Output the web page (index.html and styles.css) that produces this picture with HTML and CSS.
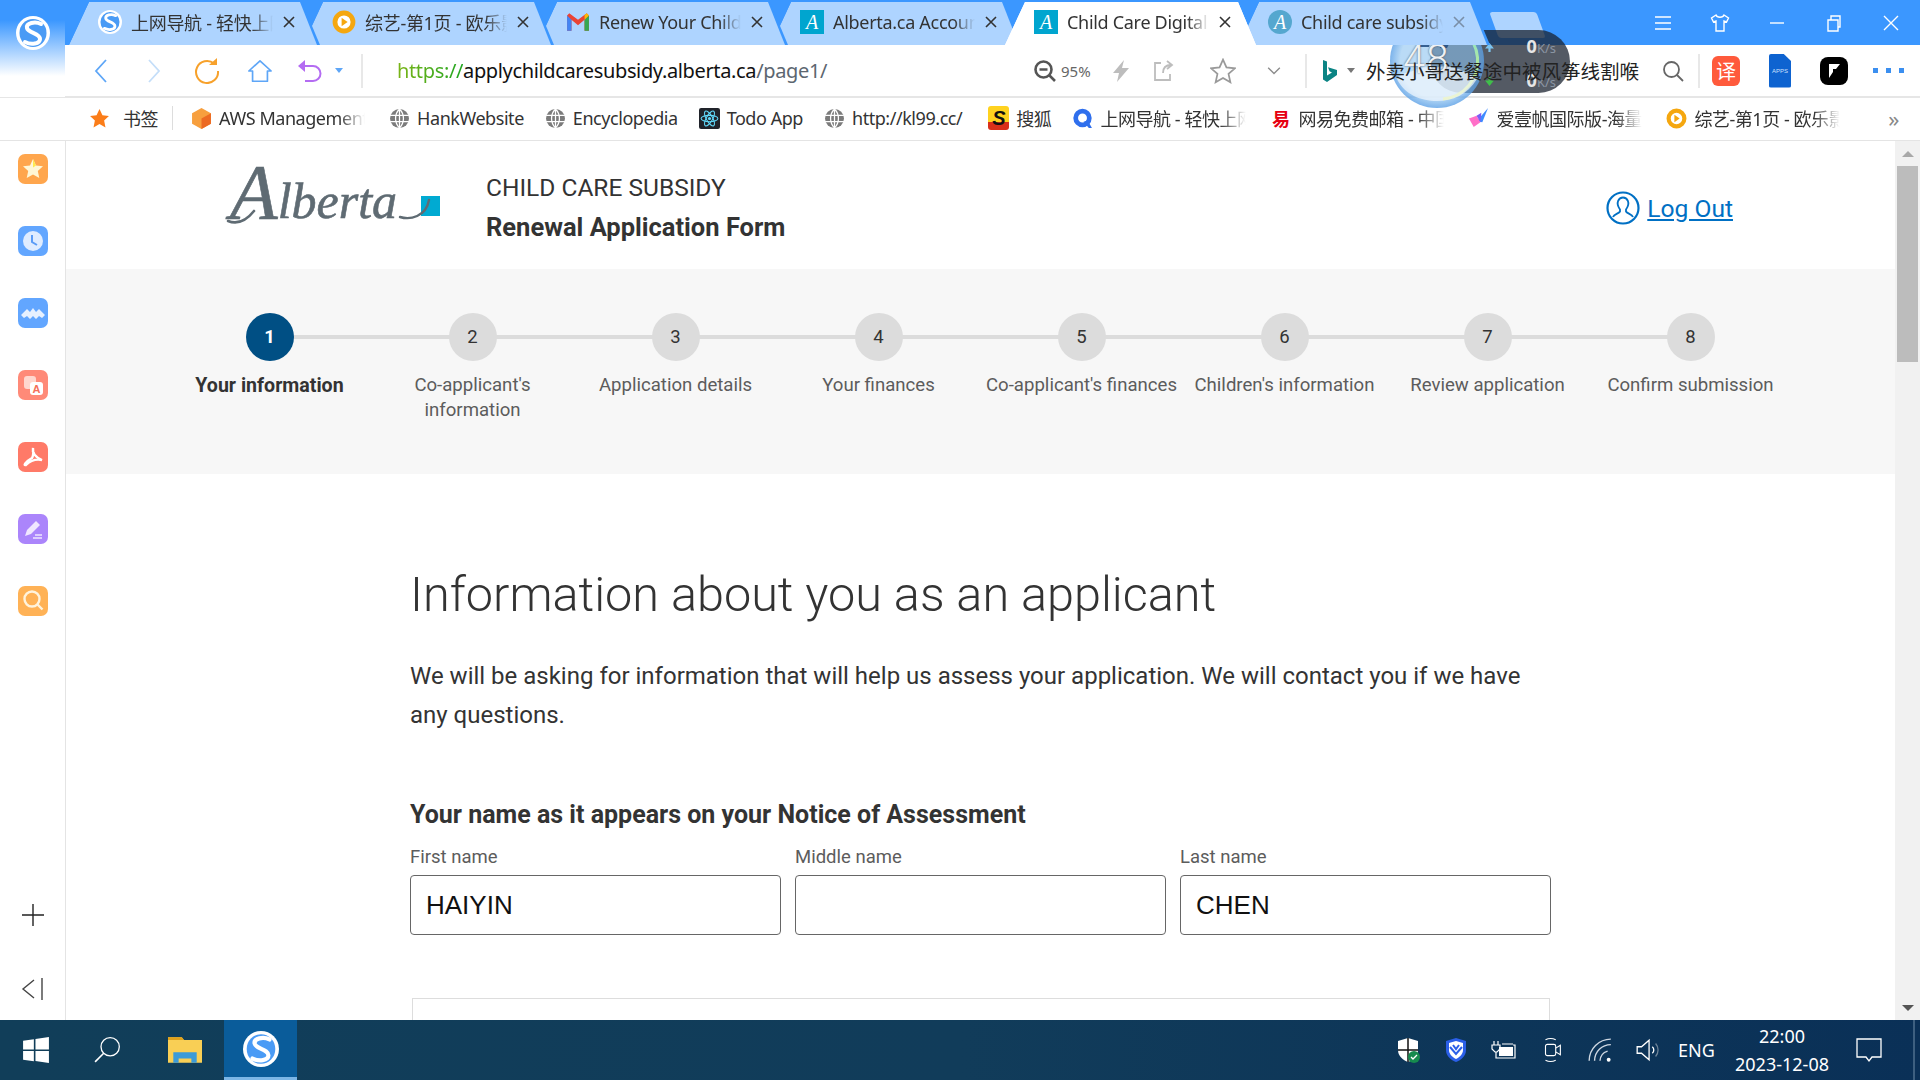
FILE: index.html
```html
<!DOCTYPE html>
<html lang="en">
<head>
    <meta charset="UTF-8">
    <meta name="viewport" content="width=device-width, initial-scale=1.0">
    <title>Child Care Digital Services</title>
    <link rel="stylesheet" href="styles.css">
</head>
<body>
    <svg class="defs" width="0" height="0">
        <symbol id="sogou" viewBox="0 0 34 34">
            <ellipse cx="17" cy="17" rx="17" ry="17" fill="#fff"/>
            <ellipse cx="17" cy="17" rx="13.500" ry="14" fill="#4a9bf5"/>
            <path d="M25 8C19 5 10 7 11 12c1 5 13 5 13 11 0 5-9 6-15 3" fill="none" stroke="#fff" stroke-width="4" stroke-linecap="round"/>
        </symbol>
        <symbol id="globe" viewBox="0 0 20 20">
            <circle cx="10" cy="10" r="9" fill="#7b7b7b"/>
            <path d="M1 7h18M1 13h18M10 1v18M10 1c-5 5-5 13 0 18M10 1c5 5 5 13 0 18" fill="none" stroke="#fff" stroke-width="1.200"/>
        </symbol>
        <symbol id="close" viewBox="0 0 14 14">
            <path d="M2 2l10 10M12 2L2 12" fill="none" stroke="currentColor" stroke-width="1.600"/>
        </symbol>
        <symbol id="play" viewBox="0 0 20 20">
            <circle cx="10" cy="10" r="7.500" fill="#fff" stroke="#f5a70f" stroke-width="4"/>
            <path d="M8 6.500l5 3.500-5 3.500z" fill="#f5a70f"/>
        </symbol>
    </svg>

    <div class="window">
        <!-- tab strip -->
        <div class="tabbar">
            <div class="tabs">
                <div class="tab"><svg class="fav"><use href="#sogou"/></svg><span class="tab-title">上网导航 - 轻快上网</span><svg class="tab-x"><use href="#close"/></svg></div>
                <div class="tab"><svg class="fav"><use href="#play"/></svg><span class="tab-title">综艺-第1页 - 欧乐影院</span><svg class="tab-x"><use href="#close"/></svg></div>
                <div class="tab">
                    <svg class="fav" viewBox="0 0 22 22">
                        <path d="M1 5v14h4V9l6 5 6-5v10h4V5l-2-2-8 6-8-6z" fill="#ea4335"/>
                        <path d="M1 5v14h4V9z" fill="#4285f4"/><path d="M17 9v10h4V5z" fill="#34a853"/><path d="M21 5l-2-2-2 1.500V9z" fill="#fbbc04"/>
                    </svg>
                    <span class="tab-title">Renew Your Child Care</span><svg class="tab-x"><use href="#close"/></svg>
                </div>
                <div class="tab"><span class="fav fav-ab">A</span><span class="tab-title">Alberta.ca Account</span><svg class="tab-x"><use href="#close"/></svg></div>
                <div class="tab tab-active"><span class="fav fav-ab">A</span><span class="tab-title">Child Care Digital Services</span><svg class="tab-x"><use href="#close"/></svg></div>
                <div class="tab"><span class="fav fav-ab fav-round">A</span><span class="tab-title">Child care subsidy</span><svg class="tab-x tab-x-faint"><use href="#close"/></svg></div>
                <div class="tab-new"></div>
            </div>
            <div class="win-controls">
                <svg viewBox="0 0 20 20"><path d="M2 4h16M2 10h16M2 16h16"/></svg>
                <svg viewBox="0 0 20 20"><path d="M6 2L1.500 5l2 4L6 8v10h8V8l2.500 1 2-4L14 2c-1 3-7 3-8 0z"/></svg>
                <svg viewBox="0 0 20 20"><path d="M3 10h14"/></svg>
                <svg viewBox="0 0 20 20"><path d="M4 7h10v11H4zM7 7V3h9v11h-2"/></svg>
                <svg viewBox="0 0 20 20"><path d="M3 3l14 14M17 3L3 17"/></svg>
            </div>
        </div>

        <!-- address bar -->
        <div class="toolbar">
            <div class="nav-btn"><svg viewBox="0 0 16 26"><path d="M13 2L3 13l10 11" fill="none" stroke="#5ea6f7" stroke-width="1.800"/></svg></div>
            <div class="nav-btn"><svg viewBox="0 0 16 26"><path d="M3 2l10 11L3 24" fill="none" stroke="#c4def9" stroke-width="1.800"/></svg></div>
            <div class="nav-btn"><svg viewBox="0 0 26 26"><path d="M20 5.500A11 11 0 1 0 24 13" fill="none" stroke="#f7a12b" stroke-width="2"/><path d="M15 7h8V0z" fill="#f7a12b"/></svg></div>
            <div class="nav-btn"><svg viewBox="0 0 28 26"><path d="M14 2L2 13h4v11h16V13h4z" fill="none" stroke="#5ea6f7" stroke-width="1.800" stroke-linejoin="round"/></svg></div>
            <div class="nav-btn nav-undo"><svg viewBox="0 0 26 26"><path d="M7 8h10a7.500 7.500 0 0 1 0 15H9" fill="none" stroke="#b46cf2" stroke-width="2"/><path d="M9 2L2 8l7 6z" fill="#b46cf2"/></svg></div>
            <span class="caret caret-blue"></span>
            <span class="tb-sep tb-sep-first"></span>
            <div class="url"><span class="url-scheme">https://</span><span class="url-host">applychildcaresubsidy.alberta.ca</span><span class="url-path">/page1/</span></div>
            <svg class="tool tool-zoom" viewBox="0 0 24 24"><circle cx="10.500" cy="10.500" r="8" fill="none" stroke="#555" stroke-width="2.600"/><path d="M6.500 10.500h8M16 16l6 6" stroke="#555" stroke-width="2.600"/></svg>
            <span class="zoom-level">95%</span>
            <svg class="tool tool-bolt" viewBox="0 0 24 24"><path d="M15 1L4 14h6l-2 9 12-14h-7z" fill="#bdbdbd"/></svg>
            <svg class="tool tool-share" viewBox="0 0 24 24"><path d="M10 4H4v17h15v-6M12 14c0-5 3-8 8-8M16 2l5 4-5 4" fill="none" stroke="#bdbdbd" stroke-width="1.800"/></svg>
            <svg class="tool tool-star" viewBox="0 0 24 24"><path d="M12 1.500l3.200 7.200 7.800.8-5.900 5.200 1.700 7.700L12 18.400l-6.800 4 1.700-7.700L1 9.500l7.800-.8z" fill="none" stroke="#9a9a9a" stroke-width="1.600"/></svg>
            <svg class="tool tool-chev" viewBox="0 0 24 24"><path d="M5 8l7 7 7-7" fill="none" stroke="#8c8c8c" stroke-width="1.600"/></svg>
            <span class="tb-sep tb-sep-mid"></span>
            <svg class="tool tool-bing" viewBox="0 0 24 24"><path d="M6 1l4 1.500v14l5-3-2.500-1.200-1.500-4L20 11v5L10 23l-4-2.500z" fill="#0b8484"/></svg>
            <span class="caret"></span>
            <div class="search-text">外卖小哥送餐途中被风筝线割喉</div>
            <svg class="tool tool-search" viewBox="0 0 24 24"><circle cx="10.500" cy="10.500" r="7.500" fill="none" stroke="#666" stroke-width="1.800"/><path d="M16 16l6 6" stroke="#666" stroke-width="1.800"/></svg>
            <span class="tb-sep tb-sep-end"></span>
            <span class="ext ext-yi">译</span>
            <span class="ext ext-apps">APPS</span>
            <svg class="ext ext-black" viewBox="0 0 28 28"><rect width="28" height="28" rx="8"/><path d="M9 7h11l-4 5h-3v3l-4 6z" fill="#fff"/></svg>
            <div class="ext-dots"><i></i><i></i><i></i></div>
        </div>

        <!-- bookmarks -->
        <div class="bookmarks">
            <div class="bm bm-first"><svg class="bm-ico" viewBox="0 0 20 20"><path d="M10 1l2.800 6 6.200.7-4.600 4.300 1.300 6.500L10 15.200l-5.700 3.300L5.600 12 1 7.700 7.200 7z" fill="#fb7d19"/></svg><span>书签</span></div>
            <span class="bm-sep"></span>
            <div class="bm"><svg class="bm-ico" viewBox="0 0 20 20"><path d="M10 0l9 5v10l-9 5-9-5V5z" fill="#f79f3e"/><path d="M10 10l9-5v10l-9 5z" fill="#ec6a23"/></svg><span class="bm-clip">AWS Management Console</span></div>
            <div class="bm"><svg class="bm-ico"><use href="#globe"/></svg><span>HankWebsite</span></div>
            <div class="bm"><svg class="bm-ico"><use href="#globe"/></svg><span>Encyclopedia</span></div>
            <div class="bm"><svg class="bm-ico" viewBox="0 0 20 20"><rect width="20" height="20" rx="2" fill="#20232a"/><g fill="none" stroke="#61dafb" stroke-width="1"><ellipse cx="10" cy="10" rx="8" ry="3"/><ellipse cx="10" cy="10" rx="8" ry="3" transform="rotate(60 10 10)"/><ellipse cx="10" cy="10" rx="8" ry="3" transform="rotate(120 10 10)"/></g><circle cx="10" cy="10" r="1.500" fill="#61dafb"/></svg><span>Todo App</span></div>
            <div class="bm bm-gap"><svg class="bm-ico"><use href="#globe"/></svg><span>http://kl99.cc/</span></div>
            <div class="bm"><span class="bm-ico ico-sohu">S</span><span>搜狐</span></div>
            <div class="bm"><svg class="bm-ico" viewBox="0 0 20 20"><circle cx="10" cy="9.500" r="6.500" fill="none" stroke="#2f6fed" stroke-width="4.500"/><path d="M11 13l5 6h3l-4-7z" fill="#2f6fed"/></svg><span class="bm-clip">上网导航 - 轻快上网</span></div>
            <div class="bm"><span class="bm-ico ico-163">易</span><span class="bm-clip">网易免费邮箱 - 中国</span></div>
            <div class="bm"><svg class="bm-ico" viewBox="0 0 22 22"><path d="M21 0L9 14l6 1z" fill="#3f8bff"/><path d="M1 11l8-3 4 7-7 5z" fill="#ff6fc8"/><path d="M9 8l5-3-1 10z" fill="#7a5cf5"/></svg><span class="bm-clip">爱壹帆国际版-海量高清</span></div>
            <div class="bm"><svg class="bm-ico"><use href="#play"/></svg><span class="bm-clip">综艺-第1页 - 欧乐影院</span></div>
            <span class="bm-more">»</span>
        </div>

        <div class="main">
            <!-- browser side rail -->
            <aside class="rail">
                <div class="rail-apps">
                    <div class="rail-ico ri-orange"><svg viewBox="0 0 30 30"><path d="M15 5l3 6.500 7 .8-5.200 4.700 1.500 7L15 20.400 8.700 24l1.500-7L5 12.300l7-.8z" fill="#fff7d6"/><path d="M15 5l3 6.500-3 2z" fill="#ffe94d"/></svg></div>
                    <div class="rail-ico ri-blue"><svg viewBox="0 0 30 30"><circle cx="15" cy="15" r="10" fill="#dfecff"/><path d="M14 9v7l5 3" fill="none" stroke="#5b9cf6" stroke-width="2"/></svg></div>
                    <div class="rail-ico ri-blue"><svg viewBox="0 0 30 30"><path d="M3 17l6-6 3 3 3-4 3 4 3-3 6 6-3 3-3-2-3 3-3-3-3 3-3-3-3 2z" fill="#e6f0ff"/></svg></div>
                    <div class="rail-ico ri-coral"><svg viewBox="0 0 30 30"><rect x="6" y="6" width="12" height="13" rx="3" fill="#ffd7ce"/><rect x="12" y="12" width="13" height="13" rx="3" fill="#fff"/><text x="18.500" y="23" class="ri-a">A</text></svg></div>
                    <div class="rail-ico ri-red"><svg viewBox="0 0 30 30"><path d="M15 6c-1 5 2 9 9 12-5-1-11 0-16 5-3 1-1-3 6-7 2-3 1-7 1-10z" fill="none" stroke="#fff" stroke-width="2.400"/></svg></div>
                    <div class="rail-ico ri-purple"><svg viewBox="0 0 30 30"><path d="M7 22l2-6 9-9 4 4-9 9z" fill="#f0e6ff"/><path d="M17 21h7M15 24h9" stroke="#f0e6ff" stroke-width="1.600"/></svg></div>
                    <div class="rail-ico ri-amber"><svg viewBox="0 0 30 30"><circle cx="14" cy="13" r="7.500" fill="none" stroke="#fff3dc" stroke-width="2.400"/><path d="M19.500 18.500l5 5" stroke="#fff3dc" stroke-width="2.400"/></svg></div>
                </div>
                <svg class="rail-plus" viewBox="0 0 24 24"><path d="M1 12h22M12 1v22" stroke="#222" stroke-width="1.400"/></svg>
                <svg class="rail-collapse" viewBox="0 0 24 24"><path d="M13 3L2 12l11 9" fill="none" stroke="#444" stroke-width="1.400"/><path d="M21 1v22" stroke="#444" stroke-width="1.400"/></svg>
            </aside>

            <!-- web page -->
            <div class="page">
                <header class="site-head">
                    <svg class="ab-logo" viewBox="0 0 214 66">
                        <text x="2" y="46" class="ab-word"><tspan class="ab-cap">A</tspan>lberta</text>
                        <path d="M0 49c10 4 18 0 26-10" fill="none" stroke="#5f6b73" stroke-width="2.600" stroke-linecap="round"/>
                        <rect x="193" y="24" width="19" height="20" fill="#00aad2"/>
                        <path d="M172 45c10 3 26 0 29-17" fill="none" stroke="#5f6b73" stroke-width="2.400" stroke-linecap="round"/>
                    </svg>
                    <div class="site-title">
                        <div class="st-line">CHILD CARE SUBSIDY</div>
                        <div class="st-bold">Renewal Application Form</div>
                    </div>
                    <a class="logout" href="#">
                        <svg viewBox="0 0 34 34"><circle cx="17" cy="17" r="15.500" fill="none" stroke="#0070c4" stroke-width="2.200"/><path d="M7 26c1-3 6-3.500 7-5.500v-2c-5-7-1-12 3-12s8 5 3 12v2c1 2 6 2.500 7 5.500" fill="none" stroke="#0070c4" stroke-width="1.800"/></svg>
                        <span>Log Out</span>
                    </a>
                </header>

                <section class="stepper">
                    <div class="step step-on"><span class="dot">1</span><span class="step-name">Your information</span></div>
                    <div class="step"><span class="dot">2</span><span class="step-name">Co-applicant's information</span></div>
                    <div class="step"><span class="dot">3</span><span class="step-name">Application details</span></div>
                    <div class="step"><span class="dot">4</span><span class="step-name">Your finances</span></div>
                    <div class="step"><span class="dot">5</span><span class="step-name">Co-applicant's finances</span></div>
                    <div class="step"><span class="dot">6</span><span class="step-name">Children's information</span></div>
                    <div class="step"><span class="dot">7</span><span class="step-name">Review application</span></div>
                    <div class="step"><span class="dot">8</span><span class="step-name">Confirm submission</span></div>
                </section>

                <main class="content">
                    <h1>Information about you as an applicant</h1>
                    <p class="intro">We will be asking for information that will help us assess your application. We will contact you if we have any questions.</p>
                    <h2>Your name as it appears on your Notice of Assessment</h2>
                    <div class="name-row">
                        <label class="field">First name<input type="text" value="HAIYIN"></label>
                        <label class="field">Middle name<input type="text" value=""></label>
                        <label class="field">Last name<input type="text" value="CHEN"></label>
                    </div>
                    <div class="next-box"></div>
                </main>
            </div>

            <div class="scrollbar">
                <span class="sb-up"></span>
                <span class="sb-thumb"></span>
                <span class="sb-down"></span>
            </div>
        </div>

        <!-- windows taskbar -->
        <footer class="taskbar">
            <div class="tk-btn"><svg viewBox="0 0 26 26"><path d="M1 4.500l10-1.500v9.500H1zM12.500 2.800L25 1v11.500H12.500zM1 14h10v9.500L1 22zM12.500 14H25v11l-12.500-1.800z" fill="#fff"/></svg></div>
            <div class="tk-btn"><svg viewBox="0 0 26 26"><circle cx="15" cy="10" r="8.500" fill="none" stroke="#fff" stroke-width="1.200"/><path d="M9 16l-8 8" stroke="#fff" stroke-width="1.500"/></svg></div>
            <div class="tk-btn"><svg viewBox="0 0 32 26"><path d="M0 1h13l2 2.500h17V25H0z" fill="#f9cf55"/><path d="M0 1h13l2 2.500H0z" fill="#dfa11b"/><path d="M5 25V15h22v10h-5v-4H10v4z" fill="#3b9bd9"/></svg></div>
            <div class="tk-btn tk-active"><svg viewBox="0 0 34 34"><use href="#sogou"/></svg></div>
            <div class="tray">
                <svg class="tray-ico" viewBox="0 0 24 26"><path d="M12 1l10 3v9c0 6-5 10-10 12C7 23 2 19 2 13V4z" fill="#fff"/><path d="M12 1v24M2 13h20" stroke="#111" stroke-width="1.500"/><circle cx="18" cy="20" r="6" fill="#168a4e"/><path d="M15 20l2 2 4-4" fill="none" stroke="#fff" stroke-width="1.300"/></svg>
                <svg class="tray-ico" viewBox="0 0 24 26"><path d="M12 1l10 3v9c0 6-5 10-10 12C7 23 2 19 2 13V4z" fill="#2b5fe8"/><path d="M12 4l7 2v7c0 4-3 7-7 9-4-2-7-5-7-9V6z" fill="#fff"/><path d="M6 10l6 7 6-7M9 8l3 4 3-4" fill="none" stroke="#2b5fe8" stroke-width="2"/></svg>
                <svg class="tray-ico" viewBox="0 0 26 22"><path d="M3 2v4M7 2v4M1 6h8v4l-3 3H4l-3-3zM5 13v6h19V6h-2M11 5h11" fill="none" stroke="#fff" stroke-width="1.200"/><rect x="8" y="8" width="14" height="9" fill="#fff"/></svg>
                <svg class="tray-ico" viewBox="0 0 24 28"><rect x="5" y="8" width="11" height="12" rx="2" fill="none" stroke="#fff" stroke-width="1.200"/><path d="M16 12l5-3v10l-5-3M5 3c3-1.500 8-1.500 11 0M5 25c3 1.500 8 1.500 11 0" fill="none" stroke="#fff" stroke-width="1.200"/></svg>
                <svg class="tray-ico" viewBox="0 0 24 24"><path d="M2 22A20 20 0 0 1 22 2M7 22A15 15 0 0 1 22 7" fill="none" stroke="#cfd8e2" stroke-width="1.300"/><path d="M12 22a10 10 0 0 1 7-9" fill="none" stroke="#cfd8e2" stroke-width="1.300"/><circle cx="20" cy="21" r="1.800" fill="#fff"/></svg>
                <svg class="tray-ico" viewBox="0 0 24 24"><path d="M2 9v6h4l7 6V3L6 9z" fill="none" stroke="#fff" stroke-width="1.200"/><path d="M16 9a4 4 0 0 1 0 6" fill="none" stroke="#fff" stroke-width="1.200"/><path d="M19 6a9 9 0 0 1 0 12" fill="none" stroke="#6e8397" stroke-width="1.200"/></svg>
                <span class="tray-lang">ENG</span>
                <div class="tray-clock"><span>22:00</span><span>2023-12-08</span></div>
                <svg class="tray-chat" viewBox="0 0 26 26"><path d="M1 2h24v18h-9l-3 4-3-4H1z" fill="none" stroke="#fff" stroke-width="1.300"/></svg>
                <span class="tray-peek"></span>
            </div>
        </footer>

        <!-- top-left corner of the side rail runs up behind the tab strip -->
        <div class="corner"><svg class="app-logo"><use href="#sogou"/></svg></div>

        <!-- speed ball widget floats over the tab strip and toolbar -->
        <div class="speedball">
            <div class="sb-pill">
                <span class="sb-rate"><svg viewBox="0 0 10 10"><path d="M5 1L1 6h3v3h2V6h3z" fill="#7cc4f0"/></svg><span>0<small>K/s</small></span></span>
                <span class="sb-rate"><svg viewBox="0 0 10 10"><path d="M5 9L1 4h3V1h2v3h3z" fill="#3fbf4a"/></svg><span>0<small>K/s</small></span></span>
            </div>
            <div class="sb-ball">
                <svg viewBox="0 0 92 92">
                    <path d="M26 26c-1-6 3-12 9-12 5 0 7 6 5 11l-2 7H28zM48 24c0-6 6-10 11-7 3 3 2 8-1 12l-2 4h-7z" fill="#1f4a80" opacity=".85"/>
                    <path d="M45 8a38 38 0 0 1 7 76" fill="none" stroke="url(#ringfade)" stroke-width="3"/>
                    <path d="M6 64c6-8 14-6 20-10 8-4 16 0 22-2 10-2 24 2 38 12-10 16-24 22-40 22S14 80 6 64z" fill="#f2f8fd" opacity=".7"/>
                    <defs><linearGradient id="ringfade" x1="0" y1="0" x2="0" y2="1"><stop offset="0" stop-color="#7fe3d8"/><stop offset="1" stop-color="#dcec6a"/></linearGradient></defs>
                </svg>
                <span class="sb-num">48</span>
            </div>
        </div>
    </div>
</body>
</html>
```
FILE: styles.css
```css
* {
    box-sizing: border-box;
}

html, body {
    margin: 0;
    height: 100%;
    overflow: hidden;
}

body {
    font-family: 'Noto Sans', 'Noto Sans CJK SC', sans-serif;
    color: #222;
    background: #fff;
}

.defs {
    position: absolute;
}

.window {
    position: relative;
    display: flex;
    flex-direction: column;
    width: 1920px;
    height: 1080px;
    overflow: hidden;
}

.corner {
    position: absolute;
    top: 0;
    left: 0;
    width: 65px;
    height: 97px;
    background: linear-gradient(#3b97ff 0, #3b97ff 20px, #fff 76px);
}

.app-logo {
    display: block;
    width: 34px;
    height: 36px;
    margin: 15px 0 0 16px;
}

/* Tab strip */
.tabbar {
    display: flex;
    align-items: flex-end;
    height: 45px;
    flex: none;
    background: #3b97ff;
}

.tabs {
    display: flex;
    align-items: flex-end;
    margin-left: 69px;
    height: 43px;
}

.tab {
    position: relative;
    display: flex;
    align-items: center;
    flex: none;
    width: 251px;
    height: 43px;
    margin-right: -17px;
    padding: 0 0 3px 29px;
    clip-path: polygon(20px 0, calc(100% - 18px) 0, 100% 100%, 0 100%);
    font-size: 18px;
    letter-spacing: -0.3px;
    color: #333;
    background: #3b97ff;
}

.tab::before {
    content: "";
    position: absolute;
    inset: 0;
    background: #aed4ff;
    clip-path: polygon(20px 0, calc(100% - 20px) 0, calc(100% - 3px) 100%, 0 100%);
}

.tab:nth-child(1) { z-index: 6; }
.tab:nth-child(2) { z-index: 5; }
.tab:nth-child(3) { z-index: 4; }
.tab:nth-child(4) { z-index: 3; }
.tab:nth-child(6) { z-index: 1; }

.tab-active {
    z-index: 7;
    background: #fff;
}

.tab-active::before {
    background: #fff;
    clip-path: none;
}

.fav {
    position: relative;
    flex: none;
    width: 24px;
    height: 24px;
}

.fav-ab {
    display: flex;
    align-items: center;
    justify-content: center;
    font: italic 20px 'Liberation Serif', serif;
    color: #fff;
    background: #00a5cf;
}

.fav-round {
    border-radius: 50%;
    background: #55a7cf;
}

.tab-title {
    position: relative;
    flex: none;
    width: 142px;
    margin: 0 4px 0 9px;
    overflow: hidden;
    white-space: nowrap;
    -webkit-mask-image: linear-gradient(90deg, #000 85%, transparent);
    mask-image: linear-gradient(90deg, #000 85%, transparent);
}

.tab-x {
    position: relative;
    flex: none;
    width: 14px;
    height: 14px;
    margin-left: 5px;
    color: #333;
}

.tab-x-faint {
    color: #7a8fa8;
}

.tab-new {
    flex: none;
    width: 47px;
    height: 26px;
    margin: 0 0 7px 21px;
    background: #aed4ff;
    border-radius: 3px;
    transform: skewX(20deg);
}

.win-controls {
    display: flex;
    align-items: center;
    gap: 37px;
    margin-left: auto;
    padding-right: 19px;
    height: 45px;
}

.win-controls svg {
    width: 20px;
    height: 20px;
    fill: none;
    stroke: #fff;
    stroke-width: 1.400;
}

/* Address bar */
.toolbar {
    display: flex;
    align-items: center;
    flex: none;
    height: 53px;
    padding-left: 74px;
    background: #fff;
    border-bottom: 2px solid #e6e6e6;
}

.nav-btn {
    display: flex;
    align-items: center;
    justify-content: center;
    flex: none;
    width: 53px;
}

.nav-btn svg {
    width: 26px;
    height: 26px;
}

.nav-undo {
    margin-left: -4px;
}

.caret {
    flex: none;
    width: 0;
    height: 0;
    border: 4px solid transparent;
    border-top: 5px solid #777;
    border-bottom: 0;
}

.caret-blue {
    margin-left: 0;
    border-top-color: #5ea6f7;
}

.tb-sep {
    flex: none;
    width: 2px;
    height: 34px;
    background: #e8e8e8;
}

.tb-sep-first { margin-left: 18px; }
.tb-sep-mid { margin-left: 21px; }
.tb-sep-end { margin-left: 13px; }

.url {
    flex: none;
    width: 636px;
    margin-left: 34px;
    font-size: 20px;
    letter-spacing: -0.36px;
    white-space: nowrap;
}

.url-scheme {
    background: linear-gradient(90deg, #7cb518, #1fa51f);
    -webkit-background-clip: text;
    background-clip: text;
    color: transparent;
}

.url-host { color: #111; }
.url-path { color: #5c6670; }

.tool {
    flex: none;
    width: 24px;
    height: 24px;
}

.tool-bolt { margin-left: 16px; }
.tool-share { margin-left: 18px; }
.tool-star { margin-left: 35px; width: 26px; height: 26px; }
.tool-chev { margin-left: 28px; width: 20px; height: 20px; }
.tool-bing { margin-left: 10px; }
.tool-search { margin-left: 20px; }

.zoom-level {
    flex: none;
    width: 32px;
    margin-left: 4px;
    font-size: 15px;
    color: #666;
}

/* the search text stays readable on top of the speed widget */
.search-text {
    position: relative;
    z-index: 1;
    flex: none;
    width: 275px;
    margin-left: 11px;
    font-size: 19.500px;
    color: #222;
    white-space: nowrap;
}

.toolbar > .caret:not(.caret-blue) {
    margin-left: 6px;
}

.ext {
    flex: none;
    width: 28px;
    height: 30px;
    margin-left: 26px;
}

.ext-yi {
    margin-left: 12px;
    display: flex;
    align-items: center;
    justify-content: center;
    font-size: 20px;
    color: #fff;
    background: #ff5a3c;
    border-radius: 6px;
}

.ext-apps {
    display: flex;
    align-items: center;
    justify-content: center;
    width: 22px;
    height: 34px;
    margin-left: 29px;
    font: 6px 'Liberation Sans', sans-serif;
    color: #cfe0ff;
    background: #0e63d0;
    border-radius: 2px;
    clip-path: polygon(0 0, 65% 0, 100% 22%, 100% 100%, 0 100%);
}

.ext-black {
    height: 28px;
    margin-left: 29px;
}

.ext-dots {
    display: flex;
    gap: 8px;
    margin-left: 25px;
}

.ext-dots i {
    width: 5px;
    height: 5px;
    background: #3b8ff0;
}

/* Bookmarks */
.bookmarks {
    display: flex;
    align-items: center;
    flex: none;
    height: 43px;
    padding: 0 0 2px 89px;
    font-size: 18px;
    letter-spacing: -0.45px;
    color: #333;
    background: #fff;
    border-bottom: 1px solid #e4e4e4;
    white-space: nowrap;
}

.bm {
    display: flex;
    align-items: center;
    gap: 7px;
    flex: none;
    margin-right: 21px;
}

.bm-first {
    margin-right: 14px;
    gap: 13px;
}

.bm-gap {
    margin-right: 26px;
}

.bm-ico {
    flex: none;
    width: 21px;
    height: 21px;
}

.bm-clip {
    width: 146px;
    margin-right: 3px;
    overflow: hidden;
    -webkit-mask-image: linear-gradient(90deg, #000 82%, transparent);
    mask-image: linear-gradient(90deg, #000 82%, transparent);
}

.bm-sep {
    flex: none;
    width: 1px;
    height: 24px;
    margin-right: 18px;
    background: #ddd;
}

.ico-sohu {
    display: flex;
    align-items: center;
    justify-content: center;
    height: 24px;
    font: bold italic 20px 'Liberation Sans', sans-serif;
    color: #111;
    background: linear-gradient(#ffd21f 65%, #d9301a 65%);
    border-radius: 3px;
}

.ico-163 {
    display: flex;
    align-items: center;
    justify-content: center;
    font-size: 18px;
    font-weight: 700;
    color: #e60012;
}

.bm-more {
    margin-left: auto;
    padding-right: 21px;
    font-size: 22px;
    color: #888;
}

/* Main row */
.main {
    display: flex;
    flex: 1;
    min-height: 0;
}

.rail {
    display: flex;
    flex-direction: column;
    align-items: center;
    flex: none;
    width: 66px;
    padding: 13px 0 19px;
    background: #fff;
    border-right: 1px solid #e4e4e4;
}

.rail-apps {
    display: flex;
    flex-direction: column;
    gap: 42px;
    width: 30px;
}

.rail-ico {
    width: 30px;
    height: 30px;
    border-radius: 7px;
}

.rail-ico svg {
    display: block;
    width: 30px;
    height: 30px;
}

.ri-a {
    font: bold 11px 'Liberation Sans', sans-serif;
    fill: #f5705a;
    text-anchor: middle;
}

.ri-orange { background: #ffa64d; }
.ri-blue { background: #62a6ff; }
.ri-coral { background: #ff8a78; }
.ri-red { background: #ff7a68; }
.ri-purple { background: #ab85fb; }
.ri-amber { background: #ffb256; }

.rail-plus {
    width: 24px;
    height: 24px;
    margin-top: auto;
}

.rail-collapse {
    width: 24px;
    height: 24px;
    margin-top: 50px;
}

.page {
    flex: 1;
    min-width: 0;
    overflow: hidden;
    font-family: Roboto, sans-serif;
    background: #fff;
}

/* Site header */
.site-head {
    display: flex;
    align-items: center;
    height: 128px;
    padding: 0 162px;
}

.ab-logo {
    flex: none;
    width: 214px;
    height: 66px;
    overflow: visible;
}

.ab-word {
    font: italic 50px 'Liberation Serif', serif;
    fill: #5f6b73;
    stroke: #5f6b73;
    stroke-width: 0.600px;
}

.ab-cap {
    font-size: 78px;
}

.site-title {
    margin-left: 44px;
    padding-top: 4px;
    font-size: 24.500px;
    color: #333;
}

.st-line {
    line-height: 36px;
}

.st-bold {
    margin-top: 3px;
    line-height: 36px;
    font-size: 25.500px;
    font-weight: 700;
}

.logout {
    display: flex;
    align-items: center;
    gap: 7px;
    margin: 6px 0 0 auto;
    font-size: 24.600px;
    color: #0070c4;
}

.logout svg {
    width: 34px;
    height: 34px;
}

/* Progress steps */
.stepper {
    display: grid;
    grid-template-columns: repeat(8, 203px);
    height: 205px;
    padding: 44px 0 0 102px;
    background: #f7f7f7;
}

.step {
    position: relative;
    display: flex;
    flex-direction: column;
    align-items: center;
    text-align: center;
    font-size: 18.600px;
    line-height: 25px;
    color: #5c5c5c;
}

.step:not(:last-child)::before {
    content: "";
    position: absolute;
    top: 22px;
    left: 50%;
    width: 203px;
    height: 4px;
    background: #dcdcdc;
}

.dot {
    position: relative;
    display: flex;
    align-items: center;
    justify-content: center;
    width: 48px;
    height: 48px;
    margin-bottom: 12px;
    border-radius: 50%;
    font-size: 18.500px;
    color: #333;
    background: #dcdcdc;
}

.step-name {
    width: 196px;
    padding: 0 30px;
}

.step:nth-child(n+5) .step-name,
.step:nth-child(3) .step-name {
    padding: 0;
}

.step-on {
    font-weight: 700;
    color: #333;
}

.step-on .dot {
    color: #fff;
    background: #004f84;
}

.step-on .step-name {
    padding: 0;
    font-size: 19.600px;
}

/* Form content */
.content {
    width: 1140px;
    margin-left: 344px;
}

h1 {
    margin: 88px 0 0;
    font-size: 48.600px;
    line-height: 66px;
    font-weight: 300;
    color: #333;
}

.intro {
    margin: 29px 0 0;
    font-size: 24px;
    line-height: 39px;
    color: #333;
}

h2 {
    margin: 64px 0 0;
    font-size: 25px;
    line-height: 32px;
    font-weight: 700;
    color: #333;
}

.name-row {
    display: grid;
    grid-template-columns: repeat(3, 371px);
    gap: 14px;
    margin-top: 14px;
}

.field {
    display: flex;
    flex-direction: column;
    gap: 6px;
    font-size: 18.500px;
    line-height: 24px;
    color: #5c5c5c;
}

.field input {
    width: 100%;
    height: 60px;
    padding: 0 15px;
    font: 26px 'Liberation Sans', sans-serif;
    color: #111;
    background: #fff;
    border: 1px solid #666;
    border-radius: 4px;
}

.next-box {
    height: 80px;
    margin: 63px 0 0 2px;
    border: 1px solid #ddd;
}

/* Scrollbar */
.scrollbar {
    display: flex;
    flex-direction: column;
    align-items: center;
    flex: none;
    width: 25px;
    padding-top: 10px;
    background: #f1f1f1;
}

.sb-up,
.sb-down {
    flex: none;
    width: 0;
    height: 0;
    border: 6px solid transparent;
}

.sb-up {
    border-top: 0;
    border-bottom: 6px solid #a8a8a8;
}

.sb-thumb {
    flex: none;
    width: 21px;
    height: 196px;
    margin-top: 9px;
    background: #bcbcbc;
}

.sb-down {
    margin-top: auto;
    margin-bottom: 9px;
    border-bottom: 0;
    border-top: 6px solid #555;
}

/* Taskbar */
.taskbar {
    display: flex;
    align-items: stretch;
    flex: none;
    height: 60px;
    color: #fff;
    background: linear-gradient(90deg, #113e59, #113c5a 50%, #0a3057);
}

.tk-btn {
    display: flex;
    align-items: center;
    justify-content: center;
    flex: none;
    width: 75px;
}

.tk-btn svg {
    width: 28px;
    height: 28px;
}

.tk-btn:first-child { width: 72px; }
.tk-btn:nth-child(2) { width: 72px; }
.tk-btn:nth-child(3) { width: 78px; margin-left: 2px; }
.tk-btn:nth-child(3) svg { width: 34px; height: 28px; }

.tk-active {
    width: 73px;
    background: #0a5c9a;
    border-bottom: 3px solid #7cb6e6;
}

.tk-active svg {
    width: 36px;
    height: 36px;
}

.tray {
    display: flex;
    align-items: center;
    margin-left: auto;
}

.tray-ico {
    flex: none;
    width: 26px;
    height: 26px;
    margin-right: 22px;
}

.tray-lang {
    width: 42px;
    margin-left: -5px;
    font: 18px 'Noto Sans', sans-serif;
}

.tray-clock {
    display: flex;
    flex-direction: column;
    align-items: center;
    gap: 6px;
    width: 100px;
    margin-left: 12px;
    font-size: 18px;
    line-height: 22px;
}

.tray-chat {
    width: 26px;
    height: 26px;
    margin-left: 24px;
}

.tray-peek {
    align-self: stretch;
    width: 2px;
    margin: 0 5px 0 31px;
    background: #3d5f80;
}

/* Speed widget */
.speedball {
    position: absolute;
    top: 12px;
    left: 1390px;
    width: 180px;
    height: 98px;
}

.sb-pill {
    position: absolute;
    top: 18px;
    left: 40px;
    display: flex;
    flex-direction: column;
    align-items: flex-end;
    gap: 12px;
    width: 140px;
    height: 63px;
    padding: 6px 14px 0 0;
    color: #e6e6e6;
    background: rgba(24, 32, 46, 0.74);
    border-radius: 32px;
}

.sb-rate {
    display: flex;
    align-items: center;
    justify-content: space-between;
    width: 72px;
    font-size: 18px;
    font-weight: 700;
    line-height: 20px;
}

.sb-rate svg {
    width: 11px;
    height: 11px;
}

.sb-rate small {
    font-size: 13px;
    font-weight: 400;
    color: #8b95a3;
}

.sb-ball {
    position: absolute;
    top: 2px;
    left: 0;
    width: 94px;
    height: 94px;
    border-radius: 50%;
    background: radial-gradient(circle, rgba(140, 195, 240, 0.6) 55%, rgba(62, 140, 225, 0.95) 84%, rgba(120, 190, 250, 0.2) 100%);
}

.sb-ball svg {
    position: absolute;
    inset: 1px;
    width: 92px;
    height: 92px;
}

.sb-num {
    position: absolute;
    top: 22px;
    left: 13px;
    font-family: Roboto, sans-serif;
    font-size: 40px;
    font-weight: 300;
    line-height: 48px;
    letter-spacing: 1px;
    color: #eef1f4;
    text-shadow: 0 0 2px #44505e;
}
```
